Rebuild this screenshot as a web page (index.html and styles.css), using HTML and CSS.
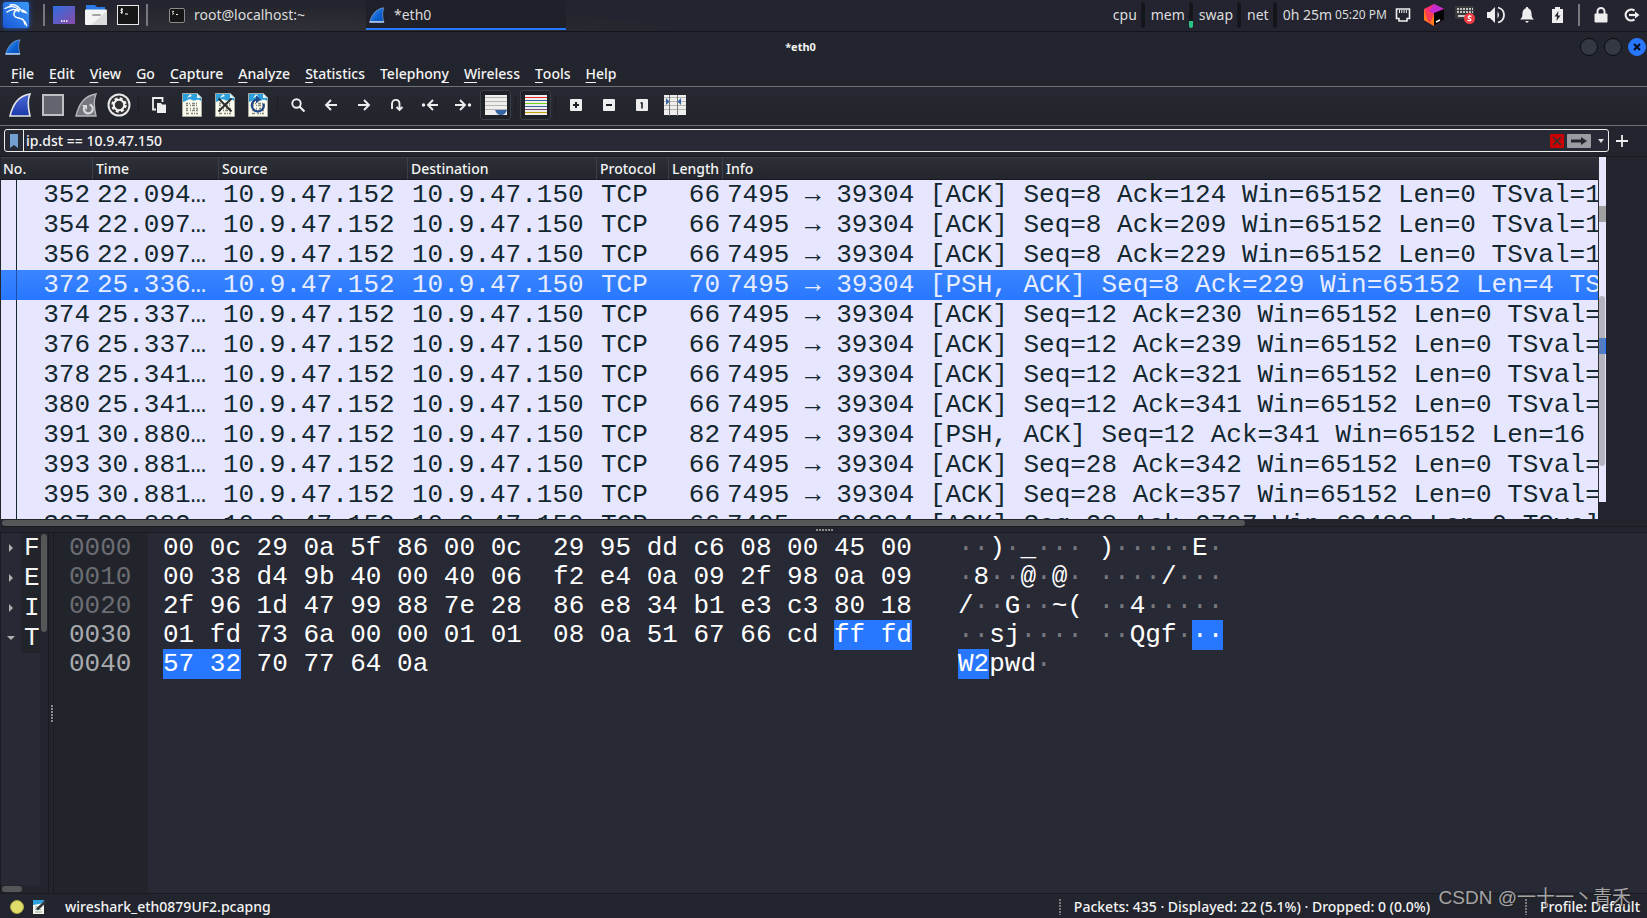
FILE: index.html
```html
<!DOCTYPE html>
<html lang="en">
<head>
<meta charset="utf-8">
<title>*eth0</title>
<link rel="stylesheet" href="styles.css">
</head>
<body>
<svg class="defs" aria-hidden="true">
  <defs>
    <linearGradient id="kali" x1="0" y1="1" x2="1" y2="0"><stop offset="0" stop-color="#1a55d8"/><stop offset="1" stop-color="#3a9bf5"/></linearGradient>
    <linearGradient id="desk" x1="0" y1="0" x2="1" y2="1"><stop offset="0" stop-color="#2f6fe0"/><stop offset="1" stop-color="#8a4aa8"/></linearGradient>
    <linearGradient id="fin" x1="0" y1="0" x2="1" y2="1"><stop offset="0" stop-color="#4fa0f5"/><stop offset=".6" stop-color="#0b5fd0"/><stop offset="1" stop-color="#0a4bb0"/></linearGradient>
    <linearGradient id="fin2" x1="0" y1="0" x2="0" y2="1"><stop offset="0" stop-color="#4a68d8"/><stop offset="1" stop-color="#1c3aa8"/></linearGradient>
    <symbol id="shark" viewBox="0 0 16 16"><path d="M.5 15.5C2.500 8 7 1.500 15 .8 13 5 13.500 10 15 15.500z" fill="url(#fin)" stroke="#8fb0dc" stroke-width=".6"/><path d="M.8 14.800h14" stroke="#b8cdea" stroke-width="1.400"/></symbol>
    <symbol id="page" viewBox="0 0 20 24"><path d="M.5.5h15l4 4v19H.5z" fill="#fbfbee" stroke="#a8aaa0"/><path d="M1 1h14l4 4v3c-4-3-6 1-9-1S5 8 1 9z" fill="#2ba0dc"/><path d="M8 1l-3 4 5-2zM15 1v4h4z" fill="#e8f4fa"/><path d="M4 10.500h2m1 0h1m2 0h3m1 0h1M4 12.500h2m2 0h1m1 0h3m1 0h1M4 15.500h2m2 0h1m2 0h2m1 0h2M4 17.500h2m2 0h1m1 0h3m1 0h2M4 20.500h3m2 0h2m1 0h1m1 0h2" stroke="#85877e" stroke-width="1.300"/></symbol>
  </defs>
</svg>

<header class="panel">
  <button class="launch kali" aria-label="Applications"><svg width="26" height="26" viewBox="0 0 26 26"><rect width="26" height="26" rx="2" fill="url(#kali)"/><path d="M2 6.500C7 3.500 13 4 15.500 8M4 10c5-3.500 9-3 12-.5M7 3c5-1 8 1 10 4M15 8c-5 1-5.500 6-1 7.500 5 1 8.500 2.500 9.500 8M15 8c4-1 6 0 8 2.500L19 9.500M19.500 17c1.500 1.500 2 3 2.300 5" fill="none" stroke="#fff" stroke-width="1.400" stroke-linecap="round"/></svg></button>
  <span class="bar"></span>
  <button class="launch" aria-label="Show desktop"><svg width="22" height="18" viewBox="0 0 22 18"><rect width="22" height="18" fill="url(#desk)"/><path d="M8 15h1.500m1 0H12m1 0h1.500" stroke="#fff" stroke-width="1.500"/></svg></button>
  <button class="launch" aria-label="File manager"><svg width="22" height="20" viewBox="0 0 22 20"><path d="M1 0h9l2 2h8v6H1z" fill="#2b78e8"/><rect y="4.500" width="22" height="15.500" rx="1" fill="#f4f4f4"/><path d="M22 6v14H6z" fill="#dcdcdc"/><rect x="7" y="9" width="9" height="2" rx="1" fill="#a5a5a5"/></svg></button>
  <button class="launch" aria-label="Terminal"><svg width="22" height="20" viewBox="0 0 22 20"><rect x=".5" y=".5" width="21" height="19" fill="#161616" stroke="#e8e8e8"/><path d="M6 4.500c-2-1-3 1-1.500 1.500S6 8 3.500 7.500M4.800 3v6M8 9h3" stroke="#fff" fill="none"/></svg></button>
  <span class="bar"></span>
  <nav class="tasks">
    <button class="task"><svg width="16" height="15" viewBox="0 0 16 15"><rect x=".5" y=".5" width="15" height="14" rx="1.500" fill="#151515" stroke="#8a8a8a"/><path d="M5 3.500c-2-1-2 1-1 1.200s1 1.800-1 1.300M7 6.500h2" stroke="#eee" fill="none"/></svg>root@localhost:~</button>
    <button class="task active"><svg width="16" height="16"><use href="#shark"/></svg>*eth0</button>
  </nav>
  <div class="monitors">
    <span class="mon">cpu<i></i></span><span class="mon">mem<i class="low"></i></span><span class="mon">swap<i></i></span><span class="mon">net<i></i></span>
    <span class="uptime">0h 25m</span><time>05:20 PM</time>
  </div>
  <div class="tray">
    <button aria-label="Network"><svg width="16" height="14" viewBox="0 0 16 14"><path d="M1.500 1h13v9.500h-2.500V13H4v-2.500H1.500z" fill="none" stroke="#eee" stroke-width="1.600"/><path d="M4.500 2v3m2.300-3v3m2.300-3v3m2.300-3v3" stroke="#eee"/></svg></button>
    <button aria-label="Toolbox"><svg width="20" height="22" viewBox="0 0 20 22"><path d="M10 0l10 5v11l-10 6L0 16V5z" fill="#ff2f6e"/><path d="M0 5l10 5v12L0 16z" fill="#ff7a1a"/><path d="M0 5l10 5-4 9-3-4z" fill="#ff3a58"/><path d="M10 0l10 5-10 5-5-3z" fill="#c42bd0"/><path d="M10 9l10-4v11l-10 6z" fill="#050505"/><path d="M12 18l4-2" stroke="#fff" stroke-width="1.500"/></svg></button>
    <button aria-label="Keyboard"><svg width="20" height="18" viewBox="0 0 20 18"><rect width="19" height="13" rx="1" fill="#3a3a3c"/><path d="M2 3h16M2 6h16" stroke="#f2f2f2" stroke-width="1.600" stroke-dasharray="2 1"/><path d="M3 10h8" stroke="#f2f2f2" stroke-width="1.600"/><circle cx="14.500" cy="12.500" r="5.500" fill="#ee3e42"/><path d="M16.500 10.500c-3-1.500-4.500 1-2 2s1 3-2 1.800" fill="none" stroke="#fff" stroke-width="1.300"/></svg></button>
    <button aria-label="Volume"><svg width="18" height="18" viewBox="0 0 18 18"><path d="M0 6h3l5-5v16l-5-5H0z" fill="#eee"/><path d="M10.500 5.500c2 2 2 5 0 7z" fill="#eee"/><path d="M11 1.500c8 2 8 13 0 15" fill="none" stroke="#eee" stroke-width="1.800"/></svg></button>
    <button aria-label="Notifications"><svg width="14" height="16" viewBox="0 0 14 16"><path d="M7 0c1 0 1.300.6 1.300 1.500C11 2.200 11.600 5 11.600 7.500c0 2.500.9 3.500 2.400 5H0c1.500-1.500 2.400-2.500 2.400-5C2.400 5 3 2.200 5.700 1.500 5.700.6 6 0 7 0zM5 14h4l-2 2z" fill="#eee"/></svg></button>
    <button aria-label="Power"><svg width="11" height="16" viewBox="0 0 11 16"><path d="M3 0h5v2h3v14H0V2h3z" fill="#eee"/><path d="M6.500 4L2.500 9.500H5L4.500 14l4-5.500H6z" fill="#232430"/></svg></button>
    <span class="bar"></span>
    <button aria-label="Lock"><svg width="14" height="16" viewBox="0 0 14 16"><path d="M3.500 8V4.500a3.500 3.500 0 0 1 7 0V8" fill="none" stroke="#eee" stroke-width="2"/><rect x=".5" y="6.500" width="13" height="9" rx="1" fill="#eee"/></svg></button>
    <button aria-label="Log out"><svg width="16" height="14" viewBox="0 0 16 14"><path d="M10.500 2.600a5.500 5.500 0 1 0 0 8.800" fill="none" stroke="#eee" stroke-width="2.200"/><path d="M5 7h7" stroke="#eee" stroke-width="2.200"/><path d="M11 3.500L15.500 7 11 10.500z" fill="#eee"/></svg></button>
  </div>
</header>

<div class="titlebar">
  <svg width="16" height="16"><use href="#shark"/></svg>
  <h1>*eth0</h1>
  <div class="winbtns"><button aria-label="Minimize"></button><button aria-label="Maximize"></button><button class="close" aria-label="Close"><svg width="8" height="8" viewBox="0 0 8 8"><path d="M1 1l6 6M7 1L1 7" stroke="#0b1020" stroke-width="2.200"/></svg></button></div>
</div>

<nav class="menu">
  <button><u>F</u>ile</button><button><u>E</u>dit</button><button><u>V</u>iew</button><button><u>G</u>o</button><button><u>C</u>apture</button><button><u>A</u>nalyze</button><button><u>S</u>tatistics</button><button>Telephon<u>y</u></button><button><u>W</u>ireless</button><button><u>T</u>ools</button><button><u>H</u>elp</button>
</nav>

<div class="toolbar">
  <button aria-label="Start capture"><svg width="22" height="24" viewBox="0 0 22 24"><path d="M1 23C4 11 9 3 21 1c-3 7-2 14 0 22z" fill="url(#fin2)" stroke="#e6e6e6" stroke-width="1.600"/></svg></button>
  <button aria-label="Stop capture"><svg width="22" height="22" viewBox="0 0 22 22"><rect x="1" y="1" width="20" height="20" fill="#62656d" stroke="#bfc0c4" stroke-width="2"/></svg></button>
  <button aria-label="Restart capture"><svg width="22" height="24" viewBox="0 0 22 24"><path d="M1 23C4 11 9 3 21 1c-3 7-2 14 0 22z" fill="#74777e" stroke="#b4b6ba" stroke-width="1.400"/><path d="M14.500 11.500a4.500 4.500 0 1 1-5 2" fill="none" stroke="#d8d9dc" stroke-width="2.200"/><path d="M7 12h5v5z" fill="#d8d9dc"/></svg></button>
  <button aria-label="Capture options"><svg width="24" height="24" viewBox="0 0 24 24"><circle cx="12" cy="12" r="11.500" fill="#e8e8e8"/><circle cx="12" cy="12" r="9.500" fill="#303030"/><circle cx="12" cy="12" r="6.500" fill="none" stroke="#f2f2f2" stroke-width="2.400" stroke-dasharray="2.900 2.200"/><circle cx="12" cy="12" r="5.200" fill="none" stroke="#f2f2f2" stroke-width="2"/></svg></button>
  <span class="sep"></span>
  <button aria-label="Open"><svg width="14" height="16" viewBox="0 0 14 16"><path d="M4 12.500H1V1h9.500v4" fill="none" stroke="#eee" stroke-width="1.800"/><path d="M5 6h4l1 1.500h4V16H5z" fill="#eee"/></svg></button>
  <button aria-label="Save"><svg width="20" height="24"><use href="#page"/></svg></button>
  <button aria-label="Close file"><svg width="20" height="24" viewBox="0 0 20 24"><use href="#page" width="20" height="24"/><path d="M3.500 5.500l13 13M16.500 5.500l-13 13" stroke="#2b2e2e" stroke-width="2"/></svg></button>
  <button aria-label="Reload"><svg width="20" height="24" viewBox="0 0 20 24"><use href="#page" width="20" height="24"/><path d="M9 6.500a6 6 0 1 0 6.500 4" fill="none" stroke="#204a87" stroke-width="2.200"/><path d="M8 2.500l5 4-5 4z" fill="#204a87"/></svg></button>
  <span class="sep"></span>
  <button aria-label="Find"><svg width="14" height="14" viewBox="0 0 14 14"><circle cx="5.500" cy="5.500" r="4.200" fill="none" stroke="#eee" stroke-width="1.900"/><path d="M8.500 8.500l5 5" stroke="#eee" stroke-width="2.200"/></svg></button>
  <button aria-label="Back"><svg width="14" height="12" viewBox="0 0 14 12"><path d="M13 6H2M7 1L2 6l5 5" fill="none" stroke="#eee" stroke-width="1.900"/></svg></button>
  <button aria-label="Forward"><svg width="14" height="12" viewBox="0 0 14 12"><path d="M1 6h11M7 1l5 5-5 5" fill="none" stroke="#eee" stroke-width="1.900"/></svg></button>
  <button aria-label="Go to packet"><svg width="14" height="14" viewBox="0 0 14 14"><path d="M2 11V6c0-5.500 7.500-5.500 7.500 0v5M6.500 9l3 3 3-3" fill="none" stroke="#eee" stroke-width="1.900"/></svg></button>
  <button aria-label="First packet"><svg width="18" height="12" viewBox="0 0 18 12"><path d="M17 6H7M12 1L7 6l5 5" fill="none" stroke="#eee" stroke-width="1.900"/><circle cx="2.500" cy="6" r="1.700" fill="#eee"/></svg></button>
  <button aria-label="Last packet"><svg width="18" height="12" viewBox="0 0 18 12"><path d="M1 6h10M6 1l5 5-5 5" fill="none" stroke="#eee" stroke-width="1.900"/><circle cx="15.500" cy="6" r="1.700" fill="#eee"/></svg></button>
  <button class="on" aria-label="Auto scroll"><svg width="22" height="20" viewBox="0 0 22 20"><rect width="22" height="20" fill="#eeeeec"/><path d="M0 2.500h22M0 6.500h22M0 10.500h22M0 14.500h22" stroke="#b4b4b0"/><path d="M10 15h12c-1 3-3 5-6 5s-5-2-6-5z" fill="#3465a4"/></svg></button>
  <span class="sep"></span>
  <button class="on" aria-label="Colorize"><svg width="22" height="20" viewBox="0 0 22 20"><rect width="22" height="20" fill="#eeeeec"/><path d="M0 2.500h22" stroke="#ef2929"/><path d="M0 5.500h22M0 11.500h22" stroke="#3465a4"/><path d="M0 8.500h22" stroke="#73d216"/><path d="M0 14.500h22" stroke="#75507b"/><path d="M0 17.500h22" stroke="#c4a000"/></svg></button>
  <span class="sep"></span>
  <button aria-label="Zoom in"><svg width="12" height="12" viewBox="0 0 12 12"><rect width="12" height="12" rx="1" fill="#eee"/><path d="M3 6h6M6 3v6" stroke="#1d1f26" stroke-width="2"/></svg></button>
  <button aria-label="Zoom out"><svg width="12" height="12" viewBox="0 0 12 12"><rect width="12" height="12" rx="1" fill="#eee"/><path d="M3 6h6" stroke="#1d1f26" stroke-width="2"/></svg></button>
  <button aria-label="Normal size"><svg width="12" height="12" viewBox="0 0 12 12"><rect width="12" height="12" rx="1" fill="#eee"/><path d="M4.500 4H6v5.500" fill="none" stroke="#1d1f26" stroke-width="1.600"/></svg></button>
  <button aria-label="Resize columns"><svg width="22" height="21" viewBox="0 0 22 21"><rect width="22" height="20" fill="#eeeeec"/><path d="M0 2.500h22M0 6.500h22M0 10.500h22M0 14.500h22" stroke="#b4b4b0"/><path d="M5.500 0v21M13.500 0v21" stroke="#77787a"/><path d="M2 3l3.500 3.500L2 10zM17 3l-3.500 3.500L17 10z" fill="#3465a4"/></svg></button>
</div>

<form class="filter">
  <div class="field">
    <button type="button" class="mark" aria-label="Bookmarks"><svg width="8" height="14" viewBox="0 0 8 14"><path d="M0 0h8v14l-4-3-4 3z" fill="#729fcf"/></svg></button>
    <input type="text" aria-label="Display filter" value="ip.dst == 10.9.47.150">
    <button type="button" aria-label="Clear"><svg width="14" height="14" viewBox="0 0 14 14"><rect width="14" height="14" rx="1" fill="#cc0000"/><path d="M3 3l8 8M11 3l-8 8" stroke="#2e3436" stroke-width="1.600"/></svg></button>
    <button type="button" aria-label="Apply"><svg width="24" height="14" viewBox="0 0 24 14"><rect width="24" height="14" rx="1" fill="#9a9ca3"/><path d="M4 5.500h10V3l6 4-6 4V8.500H4z" fill="#24262e"/></svg></button>
    <button type="button" class="drop" aria-label="History"><svg width="6" height="4" viewBox="0 0 6 4"><path d="M0 0h6L3 4z" fill="#ddd"/></svg></button>
  </div>
  <button type="button" class="add" aria-label="Add filter button"><svg width="12" height="12" viewBox="0 0 12 12"><path d="M0 6h12M6 0v12" stroke="#eee" stroke-width="1.800"/></svg></button>
</form>

<section class="packets">
  <div class="listrow">
    <div class="scroller">
    <table>
      <colgroup><col class="c-no"><col class="c-time"><col class="c-addr"><col class="c-addr"><col class="c-proto"><col class="c-len"><col></colgroup>
      <thead><tr><th>No.</th><th>Time</th><th>Source</th><th>Destination</th><th>Protocol</th><th>Length</th><th>Info</th></tr></thead>
      <tbody>
        <tr><td>352</td><td>22.094…</td><td>10.9.47.152</td><td>10.9.47.150</td><td>TCP</td><td>66</td><td>7495 → 39304 [ACK] Seq=8 Ack=124 Win=65152 Len=0 TSval=1</td></tr>
        <tr><td>354</td><td>22.097…</td><td>10.9.47.152</td><td>10.9.47.150</td><td>TCP</td><td>66</td><td>7495 → 39304 [ACK] Seq=8 Ack=209 Win=65152 Len=0 TSval=1</td></tr>
        <tr><td>356</td><td>22.097…</td><td>10.9.47.152</td><td>10.9.47.150</td><td>TCP</td><td>66</td><td>7495 → 39304 [ACK] Seq=8 Ack=229 Win=65152 Len=0 TSval=1</td></tr>
        <tr class="sel"><td>372</td><td>25.336…</td><td>10.9.47.152</td><td>10.9.47.150</td><td>TCP</td><td>70</td><td>7495 → 39304 [PSH, ACK] Seq=8 Ack=229 Win=65152 Len=4 TS</td></tr>
        <tr><td>374</td><td>25.337…</td><td>10.9.47.152</td><td>10.9.47.150</td><td>TCP</td><td>66</td><td>7495 → 39304 [ACK] Seq=12 Ack=230 Win=65152 Len=0 TSval=</td></tr>
        <tr><td>376</td><td>25.337…</td><td>10.9.47.152</td><td>10.9.47.150</td><td>TCP</td><td>66</td><td>7495 → 39304 [ACK] Seq=12 Ack=239 Win=65152 Len=0 TSval=</td></tr>
        <tr><td>378</td><td>25.341…</td><td>10.9.47.152</td><td>10.9.47.150</td><td>TCP</td><td>66</td><td>7495 → 39304 [ACK] Seq=12 Ack=321 Win=65152 Len=0 TSval=</td></tr>
        <tr><td>380</td><td>25.341…</td><td>10.9.47.152</td><td>10.9.47.150</td><td>TCP</td><td>66</td><td>7495 → 39304 [ACK] Seq=12 Ack=341 Win=65152 Len=0 TSval=</td></tr>
        <tr><td>391</td><td>30.880…</td><td>10.9.47.152</td><td>10.9.47.150</td><td>TCP</td><td>82</td><td>7495 → 39304 [PSH, ACK] Seq=12 Ack=341 Win=65152 Len=16</td></tr>
        <tr><td>393</td><td>30.881…</td><td>10.9.47.152</td><td>10.9.47.150</td><td>TCP</td><td>66</td><td>7495 → 39304 [ACK] Seq=28 Ack=342 Win=65152 Len=0 TSval=</td></tr>
        <tr><td>395</td><td>30.881…</td><td>10.9.47.152</td><td>10.9.47.150</td><td>TCP</td><td>66</td><td>7495 → 39304 [ACK] Seq=28 Ack=357 Win=65152 Len=0 TSval=</td></tr>
        <tr><td>397</td><td>30.882…</td><td>10.9.47.152</td><td>10.9.47.150</td><td>TCP</td><td>66</td><td>7495 → 39304 [ACK] Seq=28 Ack=2797 Win=63488 Len=0 TSval</td></tr>
      </tbody>
    </table>
    </div>
    <div class="minimap"><i class="m-gray"></i><i class="m-blue"></i><i class="m-thumb"></i></div>
  </div>
  <div class="hscroll"><i></i></div>
</section>
<div class="hsplit"><i></i></div>

<main class="lower">
  <section class="details">
    <div class="treewrap">
      <ul class="tree"><li><span>F</span></li><li><span>E</span></li><li><span>I</span></li><li class="open"><span>T</span></li></ul>
      <div class="vscroll"><i></i></div>
    </div>
    <div class="treescroll"><i></i></div>
  </section>
  <div class="vsplit"><i></i></div>
  <section class="bytes">
    <div class="offsets"><b>0000</b><b>0010</b><b>0020</b><b class="lit">0030</b><b class="lit">0040</b></div>
    <div class="hex">
      <pre>00 0c 29 0a 5f 86 00 0c  29 95 dd c6 08 00 45 00</pre>
      <pre>00 38 d4 9b 40 00 40 06  f2 e4 0a 09 2f 98 0a 09</pre>
      <pre>2f 96 1d 47 99 88 7e 28  86 e8 34 b1 e3 c3 80 18</pre>
      <pre>01 fd 73 6a 00 00 01 01  08 0a 51 67 66 cd <mark>ff fd</mark></pre>
      <pre><mark>57 32</mark> 70 77 64 0a</pre>
    </div>
    <div class="ascii">
      <pre><s>··</s>)<s>·</s>_<s>···</s> )<s>·····</s>E<s>·</s></pre>
      <pre><s>·</s>8<s>··</s>@<s>·</s>@<s>·</s> <s>····</s>/<s>···</s></pre>
      <pre>/<s>··</s>G<s>··</s>~( <s>··</s>4<s>·····</s></pre>
      <pre><s>··</s>sj<s>····</s> <s>··</s>Qgf<s>·</s><mark>··</mark></pre>
      <pre><mark>W2</mark>pwd<s>·</s></pre>
    </div>
  </section>
</main>

<footer class="status">
  <button aria-label="Expert information"><svg width="14" height="14" viewBox="0 0 14 14"><circle cx="7" cy="7" r="6.500" fill="#e0dd6a" stroke="#a8a545"/></svg></button>
  <button aria-label="Capture comment"><svg width="14" height="14" viewBox="0 0 14 14"><path d="M0 0h11v14H0z" fill="#f4f4ea"/><path d="M0 0h11v3L0 5z" fill="#2ba0dc"/><path d="M2 7h5M2 9.500h6M2 12h7" stroke="#8aa"/><path d="M4 9.500L12.500 1.500" stroke="#33363a" stroke-width="2.500"/></svg></button>
  <span class="file">wireshark_eth0879UF2.pcapng</span>
  <span class="dots"></span>
  <span class="count">Packets: 435 · Displayed: 22 (5.1%) · Dropped: 0 (0.0%)</span>
  <span class="dots"></span>
  <span class="profile">Profile: Default</span>
</footer>
<div class="watermark">CSDN @一十一丶青禾</div>
</body>
</html>
```

FILE: styles.css
```css
* { box-sizing: border-box; }
html, body { height: 100%; }
body {
  margin: 0;
  display: flex;
  flex-direction: column;
  overflow: hidden;
  position: relative;
  background: #23252e;
  color: #f4f4f4;
  font: 500 14px/20px "Noto Sans", sans-serif;
}
button {
  margin: 0;
  padding: 0;
  border: 0;
  background: none;
  color: inherit;
  font: inherit;
  display: flex;
  align-items: center;
  justify-content: center;
}
svg { display: block; flex: none; }
.defs { position: absolute; width: 0; height: 0; }

/* desktop panel */
.panel {
  flex: none;
  height: 32px;
  display: flex;
  align-items: center;
  padding: 0 8px 2px 3px;
  background: radial-gradient(ellipse 420px 24px at 260px 30px, #303138, #26272e 90%, transparent) , #232430;
  border-bottom: 1px solid #14151a;
  color: #dcdcdc;
  font-weight: 400;
}
.bar { width: 2px; height: 22px; background: #77787c; flex: none; }
.launch { width: 32px; }
.launch.kali { width: 26px; margin-right: 14px; box-shadow: 0 0 5px #1c57c8; }
.bar + .launch { margin-left: 3px; }
.launch + .bar { margin-left: 2px; }
.launch.kali + .bar { margin-left: 0; }
.tasks { display: flex; flex: 1; align-self: stretch; margin-left: 14px; }
.task { width: 204px; height: 30px; justify-content: flex-start; gap: 9px; padding-left: 7px; font-size: 14px; }
.task.active { width: 200px; padding: 2px 0 0 3px; background: #1f2029; border-bottom: 2px solid #2777ff; }
.monitors { display: flex; align-items: center; font-size: 14px; }
.mon { display: flex; align-items: center; gap: 4px; margin-right: 6px; }
.mon i { width: 4px; height: 26px; border-radius: 2px; background: #15161b; }
.mon i.low { background: linear-gradient(#15161b 19px, #26c281 19px); }
.uptime { margin-right: 3px; }
time { font-size: 12px; }
.tray { display: flex; align-items: center; }
.tray button { width: 31px; }
.tray .bar { margin: 0 5px; }
.tray button:last-child { margin-right: -8px; }

/* window title */
.titlebar { flex: none; height: 30px; display: flex; align-items: center; padding: 0 0 0 5px; }
.titlebar h1 { flex: 1; margin: 0; text-align: center; font-size: 11px; font-weight: 700; }
.winbtns { display: flex; gap: 6px; padding-right: 1px; }
.winbtns button { width: 18px; height: 18px; border-radius: 50%; background: #343842; border: 1px solid #0c0d11; }
.winbtns .close { background: #2777ff; border-color: #2777ff; }

.menu { flex: none; height: 25px; display: flex; align-items: flex-start; padding-left: 4px; border-bottom: 1px solid #707176; }
.menu button { height: 24px; padding: 0 8px 0 7px; }
.menu u { text-underline-offset: 3px; text-decoration-thickness: 1px; }

.toolbar { flex: none; height: 39px; display: flex; align-items: center; padding: 0 0 2px 3px; border-bottom: 1px solid #707176; background: linear-gradient(#272932, #22242c); }
.toolbar button { width: 33px; height: 30px; }
.toolbar .on { width: 31px; margin: 0 1px; border: 1px solid #3c3e46; border-radius: 3px; background: #1f2128; }
.toolbar .sep { width: 7px; height: 20px; background: linear-gradient(90deg, transparent 3px, #1d1f26 3px, #1d1f26 4px, transparent 4px); }

/* display filter */
.filter { flex: none; margin: 0; padding: 3px 0 4px 4px; display: flex; align-items: center; border-bottom: 1px solid #1a1b21; }
.field { flex: 1; height: 23px; display: flex; align-items: stretch; border: 1px solid #eeeeec; border-radius: 3px; background: #272935; }
.field input { flex: 1; min-width: 0; padding: 0 2px; border: 0; outline: 0; background: none; color: inherit; font: inherit; }
.mark { width: 19px; border-right: 1px solid #eeeeec; }
.field button + button { margin-left: 3px; }
.field .drop { width: 14px; }
.filter .add { width: 38px; padding-right: 13px; }

/* packet list */
.packets { flex: none; padding-left: 1px; }
.listrow { display: flex; height: 362px; padding-right: 41px; }
.scroller { flex: 1; min-width: 0; overflow: hidden; }
table { width: 100%; table-layout: fixed; border-collapse: separate; border-spacing: 0; }
.c-no { width: 92px; }
.c-time { width: 126px; }
.c-addr { width: 189px; }
.c-proto { width: 72px; }
.c-len { width: 54px; }
th {
  height: 23px;
  padding: 0 0 0 3px;
  text-align: left;
  font-weight: 500;
  line-height: 20px;
  background: linear-gradient(#2c2f37, #23262d);
  border-top: 1px solid #3c3f46;
  border-right: 1px solid #3c3f46;
  border-bottom: 1px solid #15171b;
}
th:first-child { padding-left: 2px; }
th:last-child { border-right: 0; }
td {
  height: 30px;
  padding: 0 3px 0 4px;
  overflow: hidden;
  white-space: nowrap;
  background: #e7e6ff;
  color: #12272e;
  font: 400 26px/30px "Liberation Mono", monospace;
}
td:nth-child(1), td:nth-child(6) { text-align: right; }
td:nth-child(7) { padding-right: 0; }
td:first-child { background: linear-gradient(90deg, transparent 15px, #12272e 15px, #12272e 16px, transparent 16px) #e7e6ff; }
.sel td { background: linear-gradient(#3b85ff, #2777ff); color: #e7edff; }
.sel td:first-child { background: linear-gradient(90deg, transparent 15px, #1d4fa8 15px, #1d4fa8 16px, transparent 16px), linear-gradient(#3b85ff, #2777ff); }
.minimap { position: relative; width: 8px; height: 345px; border-left: 1px solid #303030; background: #e7e6ff; }
.minimap i { position: absolute; left: 0; width: 7px; height: 16px; }
.m-gray { top: 49px; background: #a0a0a0; }
.m-blue { top: 181px; background: #2777ff; }
.minimap .m-thumb { top: 139px; width: 6px; height: 170px; border-radius: 3px; background: rgba(130, 130, 130, .5); }
.hscroll { height: 8px; padding: 1px; border-bottom: 1px solid #191b20; }
.hscroll i { display: block; width: 75.6%; height: 6px; border-radius: 3px; background: #555657; }
.hsplit { flex: none; height: 6px; display: flex; align-items: center; justify-content: center; padding-left: 3px; border-bottom: 1px solid #191b20; }
.hsplit i { width: 18px; height: 2px; background: repeating-linear-gradient(90deg, #8a8b8f 0 2px, transparent 2px 3px); }

/* details and bytes */
.lower { flex: 1; min-height: 0; display: flex; border-bottom: 1px solid #191b20; font: 400 26px/30px "Liberation Mono", monospace; }
.details { width: 49px; display: flex; flex-direction: column; border: solid #191b20; border-width: 0 1px; }
.treewrap { flex: 1; display: flex; }
.tree { flex: 1; margin: 0; padding: 0; list-style: none; background: #272935; }
.tree li { height: 30px; display: flex; align-items: center; }
.tree li::before { content: ""; width: 4px; height: 8px; margin: 0 8px; background: #b0b0b0; clip-path: polygon(0 0, 100% 50%, 0 100%); }
.tree li.open::before { width: 8px; height: 4px; margin: 0 6px; clip-path: polygon(0 0, 100% 0, 50% 100%); }
.tree span { flex: 1; height: 30px; padding-left: 3px; background: #22242b; }
.vscroll { width: 8px; padding: 1px; }
.vscroll i { display: block; height: 98px; border-radius: 3px; background: #555657; }
.treescroll { height: 8px; padding: 1px; }
.treescroll i { display: block; width: 20px; height: 6px; border-radius: 3px; background: #555657; }
.vsplit { width: 5px; display: flex; align-items: center; justify-content: flex-end; padding-top: 2px; border-right: 1px solid #191b20; }
.vsplit i { width: 2px; height: 18px; background: repeating-linear-gradient(#8a8b8f 0 2px, transparent 2px 3px); }
.bytes { flex: 1; display: flex; background: #272935; line-height: 29px; }
.offsets, .hex, .ascii { padding-top: 1px; }
.offsets { width: 94px; padding-left: 15px; background: #22242c; color: #6c6d72; }
.offsets b { display: block; font-weight: 400; }
.offsets .lit { color: #a9aaad; }
.hex { width: 810px; padding-left: 15px; }
pre { margin: 0; height: 29px; font: inherit; color: #fff; }
mark { background: #2777ff; color: inherit; }
s { color: #77797f; text-decoration: none; }

.status { flex: none; height: 24px; display: flex; align-items: center; padding: 1px 7px 0 10px; }
.status button + button { margin-left: 9px; }
.file { flex: 1; margin-left: 18px; }
.dots { width: 2px; height: 16px; background: repeating-linear-gradient(#77797f 0 2px, transparent 2px 3px); }
.count { margin: 0 95px 0 13px; }
.profile { margin-left: 13px; }
.watermark { position: absolute; right: 16px; bottom: 6px; color: rgba(200, 200, 200, .8); font: 19px/28px "Liberation Sans", "Noto Sans CJK SC", sans-serif; text-shadow: 1px 1px 1px #222; }
```
